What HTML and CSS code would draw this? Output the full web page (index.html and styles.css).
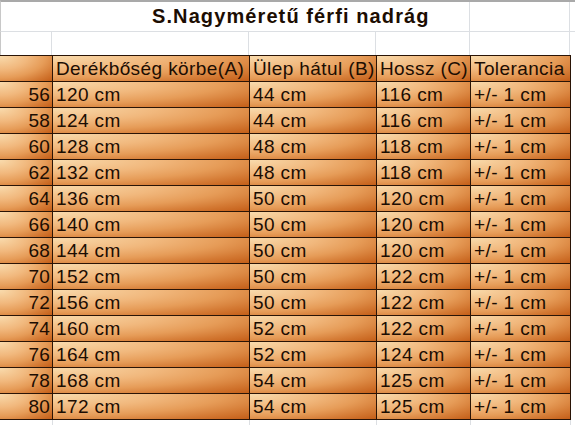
FILE: index.html
```html
<!DOCTYPE html>
<html lang="hu">
<head>
<meta charset="utf-8">
<title>S.Nagyméretű férfi nadrág</title>
<link rel="stylesheet" href="styles.css">
</head>
<body>
<div class="sheet">
  <div class="title-row">
    <div class="title-cell">S.Nagyméretű férfi nadrág</div>
    <div class="blank-cell w-e"></div>
  </div>
  <div class="blank-row">
    <div class="blank-cell w-0"></div>
    <div class="blank-cell w-a"></div>
    <div class="blank-cell w-b"></div>
    <div class="blank-cell w-c"></div>
    <div class="blank-cell w-e"></div>
  </div>
  <div class="table">
    <div class="cell num"></div><div class="cell">Derékbőség körbe(A)</div><div class="cell">Ülep hátul (B)</div><div class="cell">Hossz (C)</div><div class="cell">Tolerancia</div>
    <div class="cell num">56</div><div class="cell">120 cm</div><div class="cell">44 cm</div><div class="cell">116 cm</div><div class="cell">+/- 1 cm</div>
    <div class="cell num">58</div><div class="cell">124 cm</div><div class="cell">44 cm</div><div class="cell">116 cm</div><div class="cell">+/- 1 cm</div>
    <div class="cell num">60</div><div class="cell">128 cm</div><div class="cell">48 cm</div><div class="cell">118 cm</div><div class="cell">+/- 1 cm</div>
    <div class="cell num">62</div><div class="cell">132 cm</div><div class="cell">48 cm</div><div class="cell">118 cm</div><div class="cell">+/- 1 cm</div>
    <div class="cell num">64</div><div class="cell">136 cm</div><div class="cell">50 cm</div><div class="cell">120 cm</div><div class="cell">+/- 1 cm</div>
    <div class="cell num">66</div><div class="cell">140 cm</div><div class="cell">50 cm</div><div class="cell">120 cm</div><div class="cell">+/- 1 cm</div>
    <div class="cell num">68</div><div class="cell">144 cm</div><div class="cell">50 cm</div><div class="cell">120 cm</div><div class="cell">+/- 1 cm</div>
    <div class="cell num">70</div><div class="cell">152 cm</div><div class="cell">50 cm</div><div class="cell">122 cm</div><div class="cell">+/- 1 cm</div>
    <div class="cell num">72</div><div class="cell">156 cm</div><div class="cell">50 cm</div><div class="cell">122 cm</div><div class="cell">+/- 1 cm</div>
    <div class="cell num">74</div><div class="cell">160 cm</div><div class="cell">52 cm</div><div class="cell">122 cm</div><div class="cell">+/- 1 cm</div>
    <div class="cell num">76</div><div class="cell">164 cm</div><div class="cell">52 cm</div><div class="cell">124 cm</div><div class="cell">+/- 1 cm</div>
    <div class="cell num">78</div><div class="cell">168 cm</div><div class="cell">54 cm</div><div class="cell">125 cm</div><div class="cell">+/- 1 cm</div>
    <div class="cell num">80</div><div class="cell">172 cm</div><div class="cell">54 cm</div><div class="cell">125 cm</div><div class="cell">+/- 1 cm</div>
  </div>
  <div class="blank-row bottom">
    <div class="blank-cell w-0"></div>
    <div class="blank-cell w-a"></div>
    <div class="blank-cell w-b"></div>
    <div class="blank-cell w-c"></div>
    <div class="blank-cell w-e"></div>
  </div>
</div>
</body>
</html>
```
FILE: styles.css
```css
html, body {
  margin: 0;
  padding: 0;
  background: #ffffff;
}

.sheet {
  width: 575px;
  height: 425px;
  overflow: hidden;
  background: #ffffff;
  font-family: "Liberation Sans", Arial, sans-serif;
  color: #1c0d02;
}

.title-row {
  display: flex;
  height: 29px;
  border-top: 2px solid #a9a9a9;
  border-bottom: 1px solid #dcdfe3;
  border-left: 1px solid #c8c8c8;
}

.title-cell {
  width: 469px;
  flex: none;
  box-sizing: border-box;
  padding-left: 151px;
  font-weight: bold;
  font-size: 20px;
  letter-spacing: 1.1px;
  line-height: 29px;
  border-right: 1px solid #dcdfe3;
  white-space: nowrap;
}

.blank-row {
  display: flex;
  height: 23px;
  border-left: 1px solid #c8c8c8;
}

.blank-row.bottom {
  height: 6px;
  border-left: none;
}

.blank-cell {
  flex: none;
  box-sizing: border-box;
  border-right: 1px solid #dcdfe3;
  height: 100%;
}

.blank-row .w-0 { width: 51px; }
.blank-row.bottom .w-0 { width: 53px; }
.w-a { width: 197px; }
.w-b { width: 127px; }
.w-c { width: 94px; }
.w-e { width: 100px; }

.table {
  display: grid;
  width: 571px;
  grid-template-columns: 52px 196px 126px 93px 99px;
  grid-auto-rows: 25px;
  gap: 1px;
  padding: 1px 1px 1px 0;
  box-sizing: border-box;
  background: #2a1406;
}

.cell {
  background: radial-gradient(farthest-corner at 0 0, #f9dbad 0%, #f1b87d 38%, #e69c58 62%, #d47a34 82%, #c45e18 100%);
  font-size: 19px;
  letter-spacing: 0.4px;
  line-height: 25px;
  padding-left: 3px;
  white-space: nowrap;
  overflow: hidden;
}

.cell.num {
  text-align: right;
  padding-left: 0;
  padding-right: 2px;
  letter-spacing: 0.2px;
}
```
